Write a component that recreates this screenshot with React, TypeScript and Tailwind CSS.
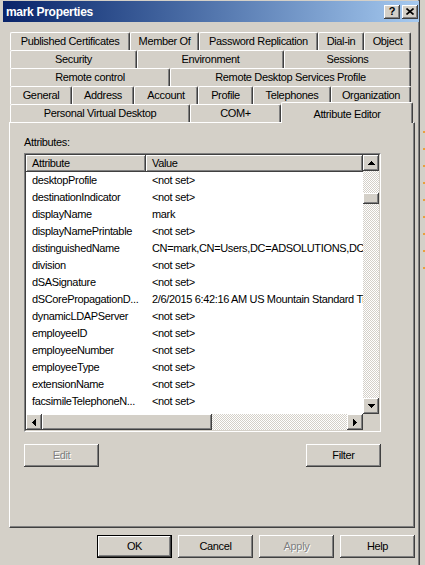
import React from 'react';

// classic 3D bevels
const raised =
  'bg-[#d4d0c8] shadow-[inset_-1px_-1px_0_#404040,inset_1px_1px_0_#ffffff,inset_-2px_-2px_0_#808080,inset_2px_2px_0_#d4d0c8]';
const checker =
  'bg-[image:repeating-conic-gradient(#ffffff_0_25%,#d4d0c8_0_50%)] bg-[length:2px_2px]';
const disabledText = 'text-[#808080] [text-shadow:1px_1px_0_#ffffff]';

const tabRows: [string, string][][] = [
  [
    ['Published Certificates', 'w-[120px]'],
    ['Member Of', 'w-[69px]'],
    ['Password Replication', 'w-[119px]'],
    ['Dial-in', 'w-[46px]'],
    ['Object', 'w-[47px]'],
  ],
  [
    ['Security', 'w-[127px]'],
    ['Environment', 'w-[147px]'],
    ['Sessions', 'w-[127px]'],
  ],
  [
    ['Remote control', 'w-[160px]'],
    ['Remote Desktop Services Profile', 'w-[241px]'],
  ],
  [
    ['General', 'w-[62px]'],
    ['Address', 'w-[62px]'],
    ['Account', 'w-[64px]'],
    ['Profile', 'w-[55px]'],
    ['Telephones', 'w-[78px]'],
    ['Organization', 'w-[80px]'],
  ],
];

const attributes: [string, string][] = [
  ['desktopProfile', '<not set>'],
  ['destinationIndicator', '<not set>'],
  ['displayName', 'mark'],
  ['displayNamePrintable', '<not set>'],
  ['distinguishedName', 'CN=mark,CN=Users,DC=ADSOLUTIONS,DC=local'],
  ['division', '<not set>'],
  ['dSASignature', '<not set>'],
  ['dSCorePropagationD...', '2/6/2015 6:42:16 AM US Mountain Standard Time'],
  ['dynamicLDAPServer', '<not set>'],
  ['employeeID', '<not set>'],
  ['employeeNumber', '<not set>'],
  ['employeeType', '<not set>'],
  ['extensionName', '<not set>'],
  ['facsimileTelephoneN...', '<not set>'],
  ['flags', '<not set>'],
];

const Tab = ({ label, w }: { label: string; w: string }) => (
  <div
    className={`${w} h-[18px] shrink-0 flex items-center justify-center whitespace-nowrap rounded-t-[2px] border-t border-l border-r border-t-white border-l-white border-r-[#404040] shadow-[inset_-1px_0_0_#808080]`}
  >
    {label}
  </div>
);

const ArrowUp = () => (
  <svg width="7" height="4" shapeRendering="crispEdges">
    <rect x="3" y="0" width="1" height="1" />
    <rect x="2" y="1" width="3" height="1" />
    <rect x="1" y="2" width="5" height="1" />
    <rect x="0" y="3" width="7" height="1" />
  </svg>
);

const ArrowDown = () => (
  <svg width="7" height="4" shapeRendering="crispEdges">
    <rect x="0" y="0" width="7" height="1" />
    <rect x="1" y="1" width="5" height="1" />
    <rect x="2" y="2" width="3" height="1" />
    <rect x="3" y="3" width="1" height="1" />
  </svg>
);

const ArrowLeft = () => (
  <svg width="4" height="7" shapeRendering="crispEdges">
    <rect x="0" y="3" width="1" height="1" />
    <rect x="1" y="2" width="1" height="3" />
    <rect x="2" y="1" width="1" height="5" />
    <rect x="3" y="0" width="1" height="7" />
  </svg>
);

const ArrowRight = () => (
  <svg width="4" height="7" shapeRendering="crispEdges">
    <rect x="0" y="0" width="1" height="7" />
    <rect x="1" y="1" width="1" height="5" />
    <rect x="2" y="2" width="1" height="3" />
    <rect x="3" y="3" width="1" height="1" />
  </svg>
);

const Button = ({ label, disabled, isDefault }: { label: string; disabled?: boolean; isDefault?: boolean }) => (
  <div className={`w-[75px] h-[23px] ${isDefault ? 'border border-black' : ''}`}>
    <div className={`w-full h-full flex items-center justify-center ${raised} ${disabled ? disabledText : ''}`}>
      {label}
    </div>
  </div>
);

export default function App() {
  return (
    <div className="w-[425px] h-[565px] flex overflow-hidden bg-[#d4d0c8] text-black text-[11px] tracking-[-0.35px] font-['Liberation_Sans',Arial,sans-serif]">
      {/* ===== DIALOG ===== */}
      <div className="w-[420px] h-full shrink-0 flex flex-col pt-[1px] border-r border-r-[#404040] shadow-[inset_-1px_0_0_#808080]">
        {/* title bar */}
        <div className="ml-[3px] w-[416px] h-[21px] flex items-center justify-between pl-[3px] pr-[1px] bg-linear-to-r from-[#0a246a] to-[#a6caf0]">
          <span className="text-white font-bold text-[12px] tracking-[-0.3px]">mark Properties</span>
          <div className="flex gap-[2px]">
            <div className={`w-[16px] h-[14px] flex items-center justify-center font-bold text-[11px] tracking-normal leading-none ${raised}`}>
              ?
            </div>
            <div className={`w-[16px] h-[14px] flex items-center justify-center ${raised}`}>
              <svg width="8" height="7" viewBox="0 0 8 7">
                <path d="M0.5 0.5 L7.5 6.5 M7.5 0.5 L0.5 6.5" stroke="#000" strokeWidth="1.6" />
              </svg>
            </div>
          </div>
        </div>

        {/* tab rows */}
        <div className="mt-[10px] ml-[10px] flex flex-col">
          {tabRows.map((row, i) => (
            <div key={i} className="flex h-[18px]">
              {row.map(([label, w]) => (
                <Tab key={label} label={label} w={w} />
              ))}
            </div>
          ))}
          <div className="flex h-[18px] items-end">
            <Tab label="Personal Virtual Desktop" w="w-[180px]" />
            <Tab label="COM+" w="w-[91px]" />
            <div className="relative z-10 w-[132px] h-[21px] -mb-[1px] shrink-0 flex justify-center pt-[3px] bg-[#d4d0c8] rounded-t-[2px] border-t border-l border-r border-t-white border-l-white border-r-[#404040] shadow-[inset_-1px_0_0_#808080]">
              Attribute Editor
            </div>
          </div>
        </div>

        {/* panel */}
        <div className="ml-[9px] w-[406px] h-[406px] pl-[14px] pt-[13px] border border-t-white border-l-white border-r-[#404040] border-b-[#404040] shadow-[inset_-1px_-1px_0_#808080]">
          <div className="h-[13px] leading-[13px]">Attributes:</div>

          {/* list view */}
          <div className="mt-[4px] w-[357px] h-[279px] border border-t-[#808080] border-l-[#808080] border-r-white border-b-white">
            <div className="w-full h-full bg-white border border-t-[#404040] border-l-[#404040] border-r-[#d4d0c8] border-b-[#d4d0c8] grid grid-cols-[337px_16px] grid-rows-[259px_16px]">
              <div className="overflow-hidden flex flex-col">
                <div className="h-[17px] shrink-0 flex">
                  <div className={`w-[120px] h-full flex items-center pl-[6px] ${raised}`}>Attribute</div>
                  <div className={`w-[217px] h-full flex items-center pl-[6px] ${raised}`}>Value</div>
                </div>
                {attributes.map(([name, value]) => (
                  <div key={name} className="h-[17px] shrink-0 flex items-center whitespace-nowrap">
                    <div className="w-[120px] shrink-0 pl-[6px] overflow-hidden">{name}</div>
                    <div className="flex-1 pl-[6px] overflow-hidden">{value}</div>
                  </div>
                ))}
              </div>

              {/* vertical scrollbar */}
              <div className="flex flex-col">
                <div className={`h-[16px] shrink-0 flex items-center justify-center ${raised}`}>
                  <ArrowUp />
                </div>
                <div className={`flex-1 ${checker}`}>
                  <div className={`mt-[22px] h-[11px] ${raised}`} />
                </div>
                <div className={`h-[16px] shrink-0 flex items-center justify-center ${raised}`}>
                  <ArrowDown />
                </div>
              </div>

              {/* horizontal scrollbar */}
              <div className="flex">
                <div className={`w-[16px] shrink-0 flex items-center justify-center ${raised}`}>
                  <ArrowLeft />
                </div>
                <div className={`w-[170px] shrink-0 ${raised}`} />
                <div className={`flex-1 ${checker}`} />
                <div className={`w-[16px] shrink-0 flex items-center justify-center ${raised}`}>
                  <ArrowRight />
                </div>
              </div>
              <div className="bg-[#d4d0c8]" />
            </div>
          </div>

          <div className="mt-[12px] w-[357px] flex justify-between">
            <Button label="Edit" disabled />
            <Button label="Filter" />
          </div>
        </div>

        {/* dialog buttons */}
        <div className="mt-[7px] ml-[97px] flex gap-[6px]">
          <Button label="OK" isDefault />
          <Button label="Cancel" />
          <Button label="Apply" disabled />
          <Button label="Help" />
        </div>
      </div>

      {/* window behind */}
      <div className="flex-1 flex flex-col gap-[15px] pt-[131px] pl-[3px]">
        {Array.from({ length: 9 }).map((_, i) => (
          <div key={i} className="w-[2px] h-[2px] bg-[#e8a040]" />
        ))}
      </div>
    </div>
  );
}
